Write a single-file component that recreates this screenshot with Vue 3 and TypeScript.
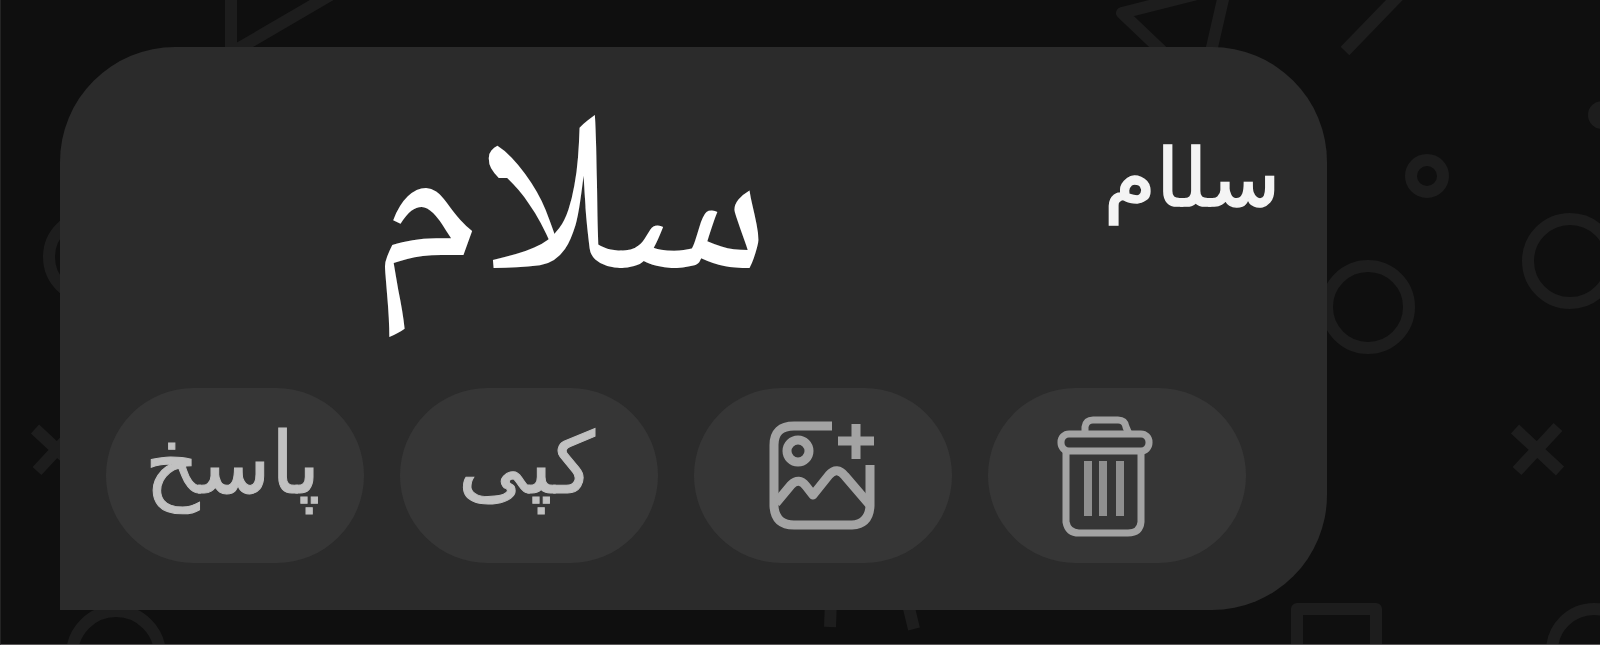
<template>
  <div class="chat">
    <!-- Wallpaper doodles -->
    <svg class="wallpaper" viewBox="0 0 1600 645" aria-hidden="true">
      <path v-for="d in doodles" :key="d" :d="d" />
      <circle v-for="(c, i) in rings" :key="i" :cx="c.x" :cy="c.y" :r="c.r" />
    </svg>
    <!-- Message -->
    <div class="bubble" dir="rtl">
      <div class="message">
        <span class="name"><span class="name-text">{{ text }}</span></span>
        <span class="body"><span class="body-text">{{ text }}</span></span>
      </div>
      <div class="actions">
        <button class="btn" aria-label="delete" @click="text = ''">
          <svg class="icon trash" viewBox="0 0 100 124">
            <path d="M28 20V13Q29 6 36 6H61Q68 6 69 13L72 20" />
            <rect x="4" y="20" width="88" height="17" rx="8" />
            <path d="M9 38V108Q11 119 22 119H71Q83 119 84 108V38" />
            <path class="bars" d="M31 47V102M46 47V102M63 47V102" />
          </svg>
        </button>
        <button class="btn" aria-label="image">
          <svg class="icon image" viewBox="0 0 110 114">
            <path d="M64 7H26Q6 7 6 26V87Q7 106 26 106H84Q101 105 102 87V46" />
            <path d="M8 84L23 66Q31 58 38 67L45 76L61 56Q69 47 77 57L101 85" />
            <circle cx="30" cy="32" r="11" />
            <path class="plus" d="M88 5V40M70 22H106" />
          </svg>
        </button>
        <button class="btn"><span class="label copy">کپی</span></button>
        <button class="btn"><span class="label reply">پاسخ</span></button>
      </div>
    </div>
  </div>
</template>

<script setup lang="ts">
import { ref } from "vue";

interface Ring {
  x: number;
  y: number;
  r: number;
}

const text = ref<string>("سلام");

const doodles: string[] = [
  "M231 0V60M236 50L332 -6",
  "M1205 -8L1122 13L1163 52M1224 -5L1210 56",
  "M1404 -10L1345 51",
  "M1515 429L1560 471M1558 427L1517 471",
  "M35 429L80 471M78 427L37 471",
  "M831 600L830 627M907 600L914 629",
  "M1297 660V609H1376V660",
];

const rings: Ring[] = [
  { x: 1427, y: 176, r: 16 },
  { x: 1368, y: 307, r: 41 },
  { x: 1570, y: 261, r: 42 },
  { x: 90, y: 257, r: 41 },
  { x: 116, y: 655, r: 44 },
  { x: 1594, y: 651, r: 42 },
  { x: 1602, y: 115, r: 8 },
];
</script>

<style>
body {
  margin: 0;
  background: #0f0f0f;
}
</style>

<style scoped>
.chat {
  position: relative;
  box-sizing: border-box;
  width: 1600px;
  height: 645px;
  padding: 47px 0 0 59px;
  overflow: hidden;
  background: #0f0f0f;
  border-left: 1px solid #242424;
  border-bottom: 1px solid #595758;
}

.wallpaper {
  position: absolute;
  top: 0;
  left: -1px;
  width: 1600px;
  height: 645px;
  fill: none;
  stroke: #1d1d1d;
  stroke-width: 12;
  stroke-linejoin: round;
}

.bubble {
  position: relative;
  box-sizing: border-box;
  display: flex;
  flex-direction: column;
  justify-content: space-between;
  width: 1267px;
  height: 563px;
  padding: 0 81px 47px 46px;
  background: #2b2b2b;
  border-radius: 115px 115px 115px 0;
  font-family: "DejaVu Sans", sans-serif;
}

.message {
  display: flex;
  justify-content: space-between;
  height: 320px;
  color: #fff;
}

.name {
  width: 220px;
  padding-top: 82px;
  margin-right: -34px;
  color: #f4f4f4;
  font-size: 80px;
  line-height: 100px;
  font-feature-settings: "rlig" 0, "liga" 0;
  -webkit-text-stroke: 1.500px #f4f4f4;
}

.name-text {
  transform: scaleX(1.055);
  transform-origin: right;
}

.body {
  width: 664px;
  padding-top: 52px;
  font-family: "Noto Naskh Arabic", "Noto Sans Arabic", Amiri, serif;
  font-size: 228px;
  line-height: 240px;
}

.name-text,
.body-text,
.label {
  display: inline-block;
  white-space: nowrap;
}

.actions {
  display: flex;
  justify-content: space-between;
}

.btn {
  display: flex;
  align-items: center;
  justify-content: center;
  width: 258px;
  height: 175px;
  padding: 0;
  border: none;
  border-radius: 88px;
  background: #363636;
  color: #c1c1c1;
  font-family: inherit;
  cursor: pointer;
}

.label {
  padding: 0 5px 24px 0;
  font-size: 85px;
  line-height: 100px;
  -webkit-text-stroke: 1px #c1c1c1;
}

.icon {
  fill: none;
  stroke: #a3a3a3;
  stroke-width: 9;
  stroke-linejoin: round;
}

.trash {
  width: 100px;
  height: 124px;
  margin-right: 20px;
  stroke-width: 7;
}

.bars {
  stroke: #8f8f8f;
  stroke-width: 8;
}

.image {
  width: 110px;
  height: 114px;
}
</style>
